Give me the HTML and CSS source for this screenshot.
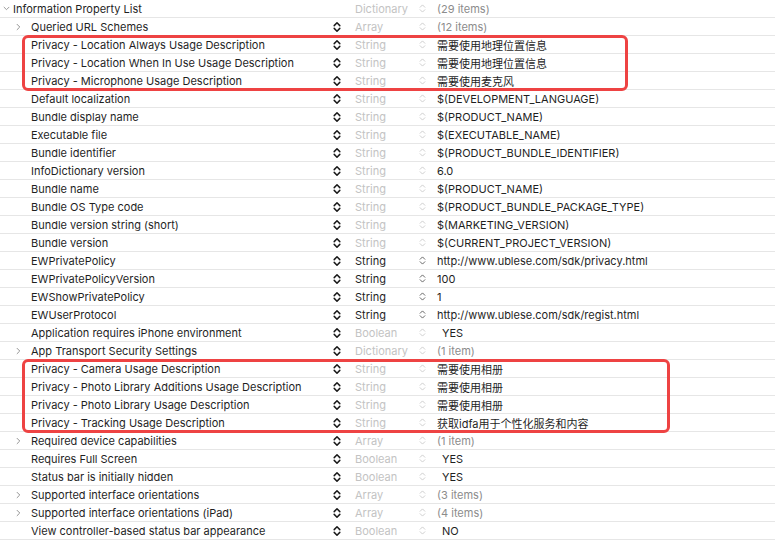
FILE: index.html
```html
<!DOCTYPE html>
<html lang="en">
<head>
    <meta charset="UTF-8">
    <meta name="viewport" content="width=device-width, initial-scale=1.0">
    <title>Info.plist</title>
    <link rel="stylesheet" href="styles.css">
</head>
<body>
    <svg class="defs" width="0" height="0">
        <symbol id="updown" viewBox="0 0 8 12">
            <path d="M1.2 4.6 L4 1.8 L6.8 4.6 M1.2 7.4 L4 10.2 L6.8 7.4" fill="none" stroke="currentColor" stroke-width="1.5" stroke-linecap="round" stroke-linejoin="round"/>
        </symbol>
        <symbol id="updown-thin" viewBox="0 0 8 12">
            <path d="M1.3 4.6 L4 1.9 L6.7 4.6 M1.3 7.4 L4 10.1 L6.7 7.4" fill="none" stroke="currentColor" stroke-width="1" stroke-linecap="round" stroke-linejoin="round"/>
        </symbol>
    </svg>

    <div class="plist">
        <div class="row root">
            <div class="key"><span class="arrow down"><svg viewBox="0 0 9 6"><path d="M1 1 L4.5 4.5 L8 1" fill="none" stroke="currentColor" stroke-width="1.1"/></svg></span>Information Property List</div>
            <div class="step"></div>
            <div class="type">Dictionary</div>
            <div class="step2"><svg><use href="#updown-thin"/></svg></div>
            <div class="value count">(29 items)</div>
        </div>
        <div class="row">
            <div class="key"><span class="arrow"><svg viewBox="0 0 6 9"><path d="M1 1 L4.5 4.5 L1 8" fill="none" stroke="currentColor" stroke-width="1.1"/></svg></span>Queried URL Schemes</div>
            <div class="step"><svg><use href="#updown"/></svg></div>
            <div class="type">Array</div>
            <div class="step2"><svg><use href="#updown-thin"/></svg></div>
            <div class="value count">(12 items)</div>
        </div>

        <div class="mark mark1">
            <div class="row">
                <div class="key"><span class="arrow"></span>Privacy - Location Always Usage Description</div>
                <div class="step"><svg><use href="#updown"/></svg></div>
                <div class="type">String</div>
                <div class="step2"><svg><use href="#updown-thin"/></svg></div>
                <div class="value">需要使用地理位置信息</div>
            </div>
            <div class="row">
                <div class="key"><span class="arrow"></span>Privacy - Location When In Use Usage Description</div>
                <div class="step"><svg><use href="#updown"/></svg></div>
                <div class="type">String</div>
                <div class="step2"><svg><use href="#updown-thin"/></svg></div>
                <div class="value">需要使用地理位置信息</div>
            </div>
            <div class="row">
                <div class="key"><span class="arrow"></span>Privacy - Microphone Usage Description</div>
                <div class="step"><svg><use href="#updown"/></svg></div>
                <div class="type">String</div>
                <div class="step2"><svg><use href="#updown-thin"/></svg></div>
                <div class="value">需要使用麦克风</div>
            </div>
        </div>

        <div class="row">
            <div class="key"><span class="arrow"></span>Default localization</div>
            <div class="step"><svg><use href="#updown"/></svg></div>
            <div class="type">String</div>
            <div class="step2"><svg><use href="#updown-thin"/></svg></div>
            <div class="value">$(DEVELOPMENT_LANGUAGE)</div>
        </div>
        <div class="row">
            <div class="key"><span class="arrow"></span>Bundle display name</div>
            <div class="step"><svg><use href="#updown"/></svg></div>
            <div class="type">String</div>
            <div class="step2"><svg><use href="#updown-thin"/></svg></div>
            <div class="value">$(PRODUCT_NAME)</div>
        </div>
        <div class="row">
            <div class="key"><span class="arrow"></span>Executable file</div>
            <div class="step"><svg><use href="#updown"/></svg></div>
            <div class="type">String</div>
            <div class="step2"><svg><use href="#updown-thin"/></svg></div>
            <div class="value">$(EXECUTABLE_NAME)</div>
        </div>
        <div class="row">
            <div class="key"><span class="arrow"></span>Bundle identifier</div>
            <div class="step"><svg><use href="#updown"/></svg></div>
            <div class="type">String</div>
            <div class="step2"><svg><use href="#updown-thin"/></svg></div>
            <div class="value">$(PRODUCT_BUNDLE_IDENTIFIER)</div>
        </div>
        <div class="row">
            <div class="key"><span class="arrow"></span>InfoDictionary version</div>
            <div class="step"><svg><use href="#updown"/></svg></div>
            <div class="type">String</div>
            <div class="step2"><svg><use href="#updown-thin"/></svg></div>
            <div class="value">6.0</div>
        </div>
        <div class="row">
            <div class="key"><span class="arrow"></span>Bundle name</div>
            <div class="step"><svg><use href="#updown"/></svg></div>
            <div class="type">String</div>
            <div class="step2"><svg><use href="#updown-thin"/></svg></div>
            <div class="value">$(PRODUCT_NAME)</div>
        </div>
        <div class="row">
            <div class="key"><span class="arrow"></span>Bundle OS Type code</div>
            <div class="step"><svg><use href="#updown"/></svg></div>
            <div class="type">String</div>
            <div class="step2"><svg><use href="#updown-thin"/></svg></div>
            <div class="value">$(PRODUCT_BUNDLE_PACKAGE_TYPE)</div>
        </div>
        <div class="row">
            <div class="key"><span class="arrow"></span>Bundle version string (short)</div>
            <div class="step"><svg><use href="#updown"/></svg></div>
            <div class="type">String</div>
            <div class="step2"><svg><use href="#updown-thin"/></svg></div>
            <div class="value">$(MARKETING_VERSION)</div>
        </div>
        <div class="row">
            <div class="key"><span class="arrow"></span>Bundle version</div>
            <div class="step"><svg><use href="#updown"/></svg></div>
            <div class="type">String</div>
            <div class="step2"><svg><use href="#updown-thin"/></svg></div>
            <div class="value">$(CURRENT_PROJECT_VERSION)</div>
        </div>
        <div class="row custom">
            <div class="key"><span class="arrow"></span>EWPrivatePolicy</div>
            <div class="step"><svg><use href="#updown"/></svg></div>
            <div class="type">String</div>
            <div class="step2"><svg><use href="#updown-thin"/></svg></div>
            <div class="value">http://www.ublese.com/sdk/privacy.html</div>
        </div>
        <div class="row custom">
            <div class="key"><span class="arrow"></span>EWPrivatePolicyVersion</div>
            <div class="step"><svg><use href="#updown"/></svg></div>
            <div class="type">String</div>
            <div class="step2"><svg><use href="#updown-thin"/></svg></div>
            <div class="value">100</div>
        </div>
        <div class="row custom">
            <div class="key"><span class="arrow"></span>EWShowPrivatePolicy</div>
            <div class="step"><svg><use href="#updown"/></svg></div>
            <div class="type">String</div>
            <div class="step2"><svg><use href="#updown-thin"/></svg></div>
            <div class="value">1</div>
        </div>
        <div class="row custom">
            <div class="key"><span class="arrow"></span>EWUserProtocol</div>
            <div class="step"><svg><use href="#updown"/></svg></div>
            <div class="type">String</div>
            <div class="step2"><svg><use href="#updown-thin"/></svg></div>
            <div class="value">http://www.ublese.com/sdk/regist.html</div>
        </div>
        <div class="row">
            <div class="key"><span class="arrow"></span>Application requires iPhone environment</div>
            <div class="step"><svg><use href="#updown"/></svg></div>
            <div class="type">Boolean</div>
            <div class="step2"><svg><use href="#updown-thin"/></svg></div>
            <div class="value bool">YES</div>
        </div>
        <div class="row">
            <div class="key"><span class="arrow"><svg viewBox="0 0 6 9"><path d="M1 1 L4.5 4.5 L1 8" fill="none" stroke="currentColor" stroke-width="1.1"/></svg></span>App Transport Security Settings</div>
            <div class="step"><svg><use href="#updown"/></svg></div>
            <div class="type">Dictionary</div>
            <div class="step2"><svg><use href="#updown-thin"/></svg></div>
            <div class="value count">(1 item)</div>
        </div>

        <div class="mark mark2">
            <div class="row">
                <div class="key"><span class="arrow"></span>Privacy - Camera Usage Description</div>
                <div class="step"><svg><use href="#updown"/></svg></div>
                <div class="type">String</div>
                <div class="step2"><svg><use href="#updown-thin"/></svg></div>
                <div class="value">需要使用相册</div>
            </div>
            <div class="row">
                <div class="key"><span class="arrow"></span>Privacy - Photo Library Additions Usage Description</div>
                <div class="step"><svg><use href="#updown"/></svg></div>
                <div class="type">String</div>
                <div class="step2"><svg><use href="#updown-thin"/></svg></div>
                <div class="value">需要使用相册</div>
            </div>
            <div class="row">
                <div class="key"><span class="arrow"></span>Privacy - Photo Library Usage Description</div>
                <div class="step"><svg><use href="#updown"/></svg></div>
                <div class="type">String</div>
                <div class="step2"><svg><use href="#updown-thin"/></svg></div>
                <div class="value">需要使用相册</div>
            </div>
            <div class="row">
                <div class="key"><span class="arrow"></span>Privacy - Tracking Usage Description</div>
                <div class="step"><svg><use href="#updown"/></svg></div>
                <div class="type">String</div>
                <div class="step2"><svg><use href="#updown-thin"/></svg></div>
                <div class="value">获取idfa用于个性化服务和内容</div>
            </div>
        </div>

        <div class="row">
            <div class="key"><span class="arrow"><svg viewBox="0 0 6 9"><path d="M1 1 L4.5 4.5 L1 8" fill="none" stroke="currentColor" stroke-width="1.1"/></svg></span>Required device capabilities</div>
            <div class="step"><svg><use href="#updown"/></svg></div>
            <div class="type">Array</div>
            <div class="step2"><svg><use href="#updown-thin"/></svg></div>
            <div class="value count">(1 item)</div>
        </div>
        <div class="row">
            <div class="key"><span class="arrow"></span>Requires Full Screen</div>
            <div class="step"><svg><use href="#updown"/></svg></div>
            <div class="type">Boolean</div>
            <div class="step2"><svg><use href="#updown-thin"/></svg></div>
            <div class="value bool">YES</div>
        </div>
        <div class="row">
            <div class="key"><span class="arrow"></span>Status bar is initially hidden</div>
            <div class="step"><svg><use href="#updown"/></svg></div>
            <div class="type">Boolean</div>
            <div class="step2"><svg><use href="#updown-thin"/></svg></div>
            <div class="value bool">YES</div>
        </div>
        <div class="row">
            <div class="key"><span class="arrow"><svg viewBox="0 0 6 9"><path d="M1 1 L4.5 4.5 L1 8" fill="none" stroke="currentColor" stroke-width="1.1"/></svg></span>Supported interface orientations</div>
            <div class="step"><svg><use href="#updown"/></svg></div>
            <div class="type">Array</div>
            <div class="step2"><svg><use href="#updown-thin"/></svg></div>
            <div class="value count">(3 items)</div>
        </div>
        <div class="row">
            <div class="key"><span class="arrow"><svg viewBox="0 0 6 9"><path d="M1 1 L4.5 4.5 L1 8" fill="none" stroke="currentColor" stroke-width="1.1"/></svg></span>Supported interface orientations (iPad)</div>
            <div class="step"><svg><use href="#updown"/></svg></div>
            <div class="type">Array</div>
            <div class="step2"><svg><use href="#updown-thin"/></svg></div>
            <div class="value count">(4 items)</div>
        </div>
        <div class="row">
            <div class="key"><span class="arrow"></span>View controller-based status bar appearance</div>
            <div class="step"><svg><use href="#updown"/></svg></div>
            <div class="type">Boolean</div>
            <div class="step2"><svg><use href="#updown-thin"/></svg></div>
            <div class="value bool">NO</div>
        </div>
    </div>
</body>
</html>
```

FILE: styles.css
```css
*, *::after {
    margin: 0;
    padding: 0;
    box-sizing: border-box;
}

body {
    background: #fff;
    font-family: Inter, "Noto Sans CJK SC", sans-serif;
    font-size: 11px;
    color: #1f1f1f;
    overflow: hidden;
}

.defs {
    position: absolute;
}

.row {
    display: grid;
    grid-template-columns: 333px 22px 64px 18px 1fr;
    align-items: center;
    height: 18px;
    border-bottom: 1px solid #e6e6e6;
    white-space: nowrap;
}

.key {
    display: flex;
    align-items: center;
    padding-left: 15px;
    overflow: hidden;
}

.arrow {
    display: inline-flex;
    align-items: center;
    width: 16px;
    height: 17px;
    padding-left: 1px;
    color: #8a8a8a;
}

.arrow svg {
    width: 5px;
    height: 8px;
}

.root .key {
    padding-left: 1px;
}

.root .arrow {
    width: 12px;
    padding-left: 2px;
}

.root .arrow svg {
    width: 7px;
    height: 5px;
}

.step, .step2 {
    display: flex;
    align-items: center;
    height: 17px;
}

.step svg {
    width: 8px;
    height: 12px;
    color: #1a1a1a;
}

.step2 svg {
    width: 7px;
    height: 11px;
    color: #c8c8c8;
}

.type {
    color: #c3c3c3;
}

.custom .type {
    color: #1f1f1f;
}

.custom .step2 svg {
    color: #555;
}

.value.count {
    color: #8c8c8c;
}

.value.bool {
    padding-left: 5px;
}

/* red highlight frames over the grouped rows */
.mark {
    position: relative;
}

.mark::after {
    content: "";
    position: absolute;
    left: 22px;
    top: -1px;
    bottom: -1px;
    border: 3px solid #ee4343;
    border-radius: 6px;
    pointer-events: none;
}

.mark1::after {
    width: 606px;
}

.mark2::after {
    width: 648px;
}
```
